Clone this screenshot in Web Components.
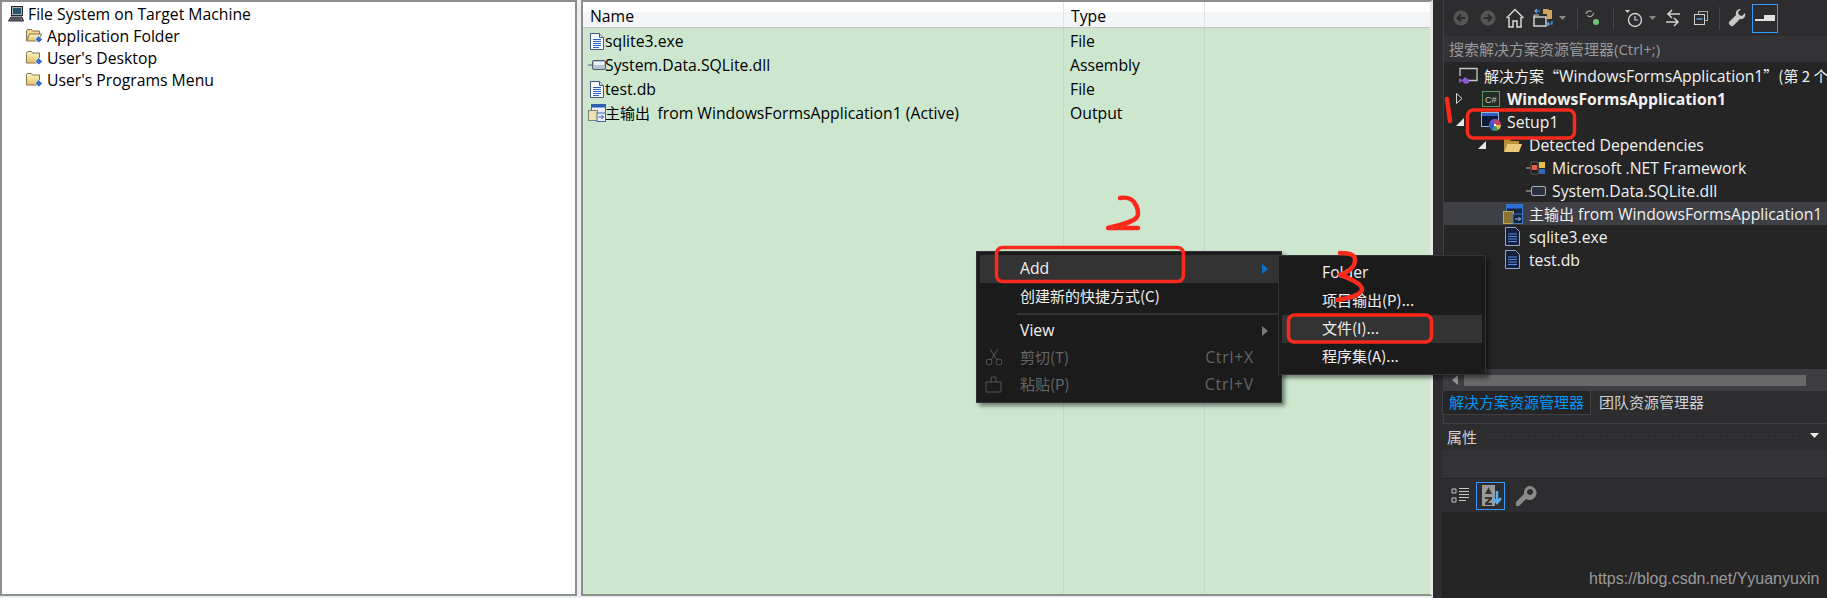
<!DOCTYPE html>
<html>
<head>
<meta charset="utf-8">
<style>
html, body { margin: 0; height: 100%; overflow: hidden; background: #2d2d30; }
body { font: 15.75px "Open Sans", "Noto Sans CJK SC", sans-serif; }
</style>
</head>
<body>
<svg width="0" height="0" style="position:absolute">
	<defs>
		<symbol id="doc-light" viewBox="0 0 14 17">
			<path d="M.5 .5h9l4 4v12h-13z" fill="#f6f8fd" stroke="#46587c"/>
			<path d="M9.500 .5v4h4" fill="#cdd7ea" stroke="#46587c"/>
			<path d="M3 6.500h8M3 8.500h8M3 10.500h8M3 12.500h8M3 14.500h6" stroke="#2c62c6"/>
		</symbol>
		<symbol id="doc-dark" viewBox="0 0 15 19">
			<path d="M.5 .5h10l4 4v14h-14z" fill="#15203c" stroke="#93a6cc"/>
			<path d="M3 7h9M3 9.500h9M3 12h9M3 14.500h9" stroke="#5b8ae6" stroke-width="1.200"/>
		</symbol>
		<symbol id="assembly" viewBox="0 0 18 12">
			<path d="M0 6h4" stroke="#7f8a9c" stroke-width="1.500"/>
			<rect x="4.500" y="1.500" width="13" height="9" rx="1.500" fill="#b8c2d0" stroke="#4f5a6e"/>
			<rect x="6" y="3" width="10" height="3" fill="#eef1f6"/>
		</symbol>
		<symbol id="output" viewBox="0 0 18 18">
			<rect x="3.500" y=".5" width="14" height="13" fill="#e8eefa" stroke="#3f66a8"/>
			<rect x="3.500" y=".5" width="14" height="3" fill="#2c5fb8"/>
			<rect x=".5" y="6.500" width="9" height="10" fill="#f0e2a8" stroke="#7c7f8a"/>
			<rect x="9" y="9" width="8.500" height="8.500" fill="#e8eefa" stroke="#3f66a8"/>
			<path d="M10.500 13h5M13.500 11l2 2-2 2" fill="none" stroke="#2c5fb8"/>
		</symbol>
		<symbol id="output-dark" viewBox="0 0 20 20">
			<rect x="3.500" y=".5" width="16" height="15" fill="#16233c" stroke="#3f7ad0"/>
			<rect x="3.500" y=".5" width="16" height="4" fill="#2c6fd8"/>
			<rect x=".5" y="7.500" width="10" height="12" fill="#8a7434" stroke="#c0a850"/>
			<rect x="10" y="10" width="9.500" height="9.500" fill="#16233c" stroke="#3f7ad0"/>
			<path d="M12 15h6M15.500 13l2 2-2 2" fill="none" stroke="#9cc0f0"/>
		</symbol>
		<symbol id="folder" viewBox="0 0 17 14">
			<linearGradient id="fold" x1="0" y1="0" x2="0" y2="1"><stop offset="0" stop-color="#fdf6cf"/><stop offset="1" stop-color="#e6c060"/></linearGradient>
			<path d="M.5 12V2l1-1.500h4l1 1.500h7v10z" fill="url(#fold)" stroke="#85754c"/>
			<path d="M12.500 6.500l4 4-3.500 3.500-4-3.500z" fill="#3a6ecb" stroke="#fff" stroke-width=".8"/>
		</symbol>
		<symbol id="folder-open" viewBox="0 0 17 14">
			<linearGradient id="fold2" x1="0" y1="0" x2="0" y2="1"><stop offset="0" stop-color="#fdf6cf"/><stop offset="1" stop-color="#e6c060"/></linearGradient>
			<path d="M.5 12V2l1-1.500h4l1 1.500h7v3" fill="#f2d888" stroke="#85754c"/>
			<path d="M.5 12l3-7h12l-3 7z" fill="url(#fold2)" stroke="#85754c"/>
			<path d="M12.500 6.500l4 4-3.500 3.500-4-3.500z" fill="#3a6ecb" stroke="#fff" stroke-width=".8"/>
		</symbol>
		<symbol id="computer" viewBox="0 0 16 16">
			<rect x="3.500" y=".5" width="11" height="9" fill="#a8b0b8" stroke="#22262c"/>
			<rect x="5" y="2" width="8" height="6" fill="#23566e"/>
			<path d="M.5 15l2.500-4h11l1.500 4z" fill="#7a7e86" stroke="#22262c"/>
			<path d="M3 13h10" stroke="#22262c"/>
		</symbol>
	</defs>
</svg>
<vs-shell></vs-shell>
<script>
const ICONS = document.querySelector("svg defs");

function icon(id, w, h) {
	// <use> can't see across shadow roots, so inline the symbol in each tree
	const sym = ICONS.querySelector("#" + id);
	return `<svg width="${w}" height="${h}" viewBox="${sym.getAttribute("viewBox")}" style="display:block;flex:none">${sym.innerHTML}</svg>`;
}

// CJK runs are a bit smaller than the latin text next to them
class ZhText extends HTMLElement {
	constructor() {
		super();
		const shadow = this.attachShadow({ mode: "open" });
		shadow.innerHTML = `
			<style>
				:host { display: inline; font-size: 15px; font-family: "Noto Sans CJK SC", "Open Sans", sans-serif; }
			</style>
			<slot></slot>
		`;
	}
}
customElements.define("zh-t", ZhText);

class TreeRow extends HTMLElement {
	constructor() {
		super();
		const indent = this.getAttribute("indent") || "0";
		const arrow = this.getAttribute("arrow");
		const shadow = this.attachShadow({ mode: "open" });
		let arrowSvg = `<span class="arrow"></span>`;
		if (arrow === "open") {
			arrowSvg = `<span class="arrow"><svg width="8" height="8"><path d="M8 0v8h-8z" fill="#e8e8e8"/></svg></span>`;
		} else if (arrow === "closed") {
			arrowSvg = `<span class="arrow"><svg width="7" height="11"><path d="M.5 .5l5.500 5-5.500 5z" fill="none" stroke="#d8d8d8"/></svg></span>`;
		}
		shadow.innerHTML = `
			<style>
				:host {
					display: flex;
					align-items: center;
					height: 23px;
					padding-left: ${indent}px;
					white-space: nowrap;
				}
				:host([selected]) { background: #3f3f46; }
				.arrow { width: 23px; flex: none; display: flex; align-items: center; }
				.ic { width: 23px; flex: none; display: flex; justify-content: center; margin-right: 5px; }
				:host([plain]) .arrow { display: none; }
			</style>
			${arrowSvg}
			<span class="ic"><slot name="icon"></slot></span>
			<slot></slot>
		`;
	}
}
customElements.define("tree-row", TreeRow);

class FileTree extends HTMLElement {
	constructor() {
		super();
		const shadow = this.attachShadow({ mode: "open" });
		shadow.innerHTML = `
			<style>
				:host {
					display: block;
					width: 577px;
					height: 596px;
					flex: none;
					box-sizing: border-box;
					background: #fff;
					border: 2px solid #8e8e8e;
					color: #000;
					padding: 1px 0 0 6px;
				}
				.row { display: flex; align-items: center; height: 22px; white-space: nowrap; }
				.row svg { margin-right: 4px; }
				.sub { padding-left: 18px; }
				.sub svg { margin-right: 4px; }
			</style>
			<div class="row">${icon("computer", 16, 16)}File System on Target Machine</div>
			<div class="row sub">${icon("folder-open", 17, 14)}Application Folder</div>
			<div class="row sub">${icon("folder", 17, 14)}User's Desktop</div>
			<div class="row sub">${icon("folder", 17, 14)}User's Programs Menu</div>
		`;
	}
}
customElements.define("file-tree", FileTree);

class FileList extends HTMLElement {
	constructor() {
		super();
		const shadow = this.attachShadow({ mode: "open" });
		const rows = [
			["doc-light", 14, 17, "sqlite3.exe", "File"],
			["assembly", 18, 12, "System.Data.SQLite.dll", "Assembly"],
			["doc-light", 14, 17, "test.db", "File"],
			["output", 18, 18, "<zh-t>主输出</zh-t>&nbsp;from WindowsFormsApplication1 (Active)", "Output"],
		];
		shadow.innerHTML = `
			<style>
				:host {
					display: flex;
					flex-direction: column;
					flex: none;
					width: 852px;
					height: 596px;
					box-sizing: border-box;
					margin-left: 4px;
					border: 2px solid #8e8e8e;
					border-right: 3px solid #e6ebe8;
					border-top-color: #8e8e8e;
					background: #cde7cf;
					color: #000;
				}
				.head {
					display: grid;
					grid-template-columns: 481px 141px 1fr;
					height: 26px;
					flex: none;
					box-sizing: border-box;
					background: linear-gradient(#fff 0 10px, #f4f5f7 10px);
					border-bottom: 1px solid #c6c6c6;
				}
				.head span { padding: 3px 0 0 7px; border-right: 1px solid #e2e3e6; }
				.head span:last-child { border: 0; }
				.body { flex: 1; display: grid; grid-template-columns: 481px 141px 1fr; }
				.col { border-right: 1px solid #bcd9cc; padding-top: 1px; }
				.col:last-child { border: 0; }
				.row { display: flex; align-items: center; height: 24px; white-space: nowrap; padding-left: 5px; }
				.ic { width: 17px; flex: none; display: flex; justify-content: center; }
				.type { padding-left: 6px; }
			</style>
			<div class="head"><span>Name</span><span>Type</span><span></span></div>
			<div class="body">
				<div class="col">${rows.map(r => `<div class="row"><span class="ic">${icon(r[0], r[1], r[2])}</span><span>${r[3]}</span></div>`).join("")}</div>
				<div class="col">${rows.map(r => `<div class="row type">${r[4]}</div>`).join("")}</div>
				<div class="col"></div>
			</div>
		`;
	}
}
customElements.define("file-list", FileList);

class MenuItem extends HTMLElement {
	constructor() {
		super();
		const shadow = this.attachShadow({ mode: "open" });
		const key = this.getAttribute("key");
		const arrow = this.getAttribute("arrow");
		shadow.innerHTML = `
			<style>
				:host {
					display: flex;
					align-items: center;
					box-sizing: border-box;
					height: 28px;
					padding: 0 10px 3px 40px;
					color: #f1f1f1;
					white-space: nowrap;
				}
				:host([active]) { background: #333334; }
				:host([disabled]) { color: #656565; height: 27px; }
				.label { flex: 1; }
				.key { padding-right: 14px; letter-spacing: .8px; }
				.ic { position: absolute; left: 8px; display: flex; }
				svg { display: block; }
			</style>
			<span class="ic"><slot name="icon"></slot></span>
			<span class="label"><slot></slot></span>
			${key ? `<span class="key">${key}</span>` : ""}
			${arrow ? `<svg width="6" height="10" style="margin-top:3px"><path d="M0 0l6 5-6 5z" fill="${arrow}"/></svg>` : ""}
		`;
	}
}
customElements.define("menu-item", MenuItem);

class PopMenu extends HTMLElement {
	constructor() {
		super();
		const shadow = this.attachShadow({ mode: "open" });
		shadow.innerHTML = `
			<style>
				:host {
					position: absolute;
					box-sizing: border-box;
					background: #1b1b1c;
					border: 1px solid #333337;
					box-shadow: 3px 3px 4px rgba(0,0,0,.45);
					padding: 3px;
				}
			</style>
			<slot></slot>
		`;
	}
}
customElements.define("pop-menu", PopMenu);

class SolutionPanel extends HTMLElement {
	constructor() {
		super();
		const shadow = this.attachShadow({ mode: "open" });
		shadow.innerHTML = `
			<style>
				:host {
					display: flex;
					flex-direction: column;
					flex: 1;
					min-width: 0;
					box-sizing: border-box;
					background: #2d2d30;
					color: #f1f1f1;
					padding-left: 10px;
					overflow: hidden;
				}
				.inner { flex: 1; display: flex; flex-direction: column; border-left: 1px solid #3f3f46; min-height: 0; }
				.tools { height: 36px; flex: none; display: flex; align-items: center; padding-left: 7px; background: #2d2d30; }
				.tools .sep { width: 1px; height: 23px; background: #46464a; flex: none; }
				.tools svg { display: block; flex: none; }
				.pin { width: 26px; height: 29px; margin-left: 6px; border: 1px solid #3399ff; box-sizing: border-box; display: flex; align-items: center; justify-content: center; }
				.search { height: 26px; flex: none; box-sizing: border-box; background: #333337; color: #999; display: flex; align-items: center; padding: 0 0 2px 5px; font-size: 15px; }
				.tree { height: 307px; flex: none; background: #252526; padding-top: 2px; box-sizing: border-box; overflow: hidden; }
				.hscroll { height: 22px; flex: none; background: #3e3e42; display: flex; align-items: center; }
				.thumb { margin-left: 5px; width: 342px; height: 11px; background: #686868; }
				.tabs { height: 24px; flex: none; display: flex; background: #2d2d30; font-size: 15px; }
				.tabs span { display: flex; align-items: center; padding: 0 6px 3px; color: #d0d0d0; margin-left: 2px; }
				.tabs .on { background: #252526; color: #0097fb; border: 1px solid #3f3f46; border-top: 0; margin-left: -2px; }
				.gap { height: 8px; flex: none; }
				.props { flex: 1; display: flex; flex-direction: column; background: #252526; border-top: 1px solid #3f3f46; margin-left: -2px; }
				.props-title { height: 26px; flex: none; box-sizing: border-box; display: flex; align-items: center; padding: 0 7px 2px 5px; background: #2d2d30; color: #d0d0d0; font-size: 15px; }
				.dots { flex: 1; margin: 0 10px; height: 6px; background-image: radial-gradient(#414146 1px, transparent 1px); background-size: 3px 3px; }
				.props-sel { height: 29px; flex: none; background: #333337; border-bottom: 1px solid #252526; box-sizing: border-box; }
				.props-bar { height: 33px; flex: none; background: #2d2d30; display: flex; align-items: center; padding-left: 9px; }
				.sort { width: 29px; height: 28px; margin-left: 5px; border: 1px solid #3399ff; box-sizing: border-box; display: flex; align-items: center; justify-content: center; }
				.vsep { width: 1px; height: 24px; margin: 0 6px 0 3px; background: #222; }
				b { font-weight: bold; }
			</style>
			<div class="inner">
				<div class="tools">
					<svg width="20" height="20"><circle cx="10" cy="10" r="7.500" fill="#555"/><path d="M14.500 10H7M10 6.500l-3.500 3.500 3.500 3.500" fill="none" stroke="#2d2d30" stroke-width="2"/></svg>
					<svg style="margin-left:7px" width="20" height="20"><circle cx="10" cy="10" r="7.500" fill="#555"/><path d="M5.500 10H13M10 6.500l3.500 3.500-3.500 3.500" fill="none" stroke="#2d2d30" stroke-width="2"/></svg>
					<svg style="margin-left:8px" width="18" height="20"><path d="M.5 10l8.500-8.500 8.500 8.500" fill="none" stroke="#d8d8d8" stroke-width="1.500"/><path d="M3 9v10h4v-6h4v6h4V9" fill="none" stroke="#d8d8d8" stroke-width="1.500"/></svg>
					<svg style="margin-left:8px" width="22" height="20"><path d="M2 9h12v9H2z" fill="none" stroke="#d0d0d0" stroke-width="1.500"/><path d="M2 9V7h5" fill="none" stroke="#d0d0d0"/><path d="M11 1h5l1 1h3v9h-5V6h-4z" fill="#cfa45c"/><path d="M3 3h5M5 1l-2 2 2 2" stroke="#5aa0e8" stroke-width="1.200" fill="none"/><path d="M20 13v3h-5M17 14l-2 2 2 2" stroke="#5aa0e8" stroke-width="1.200" fill="none"/></svg>
					<svg style="margin-left:5px" width="8" height="5"><path d="M0 0h7l-3.500 4z" fill="#888"/></svg>
					<span class="sep" style="margin-left:10px"></span>
					<svg style="margin-left:6px" width="16" height="20"><path d="M2 6a3.500 3.500 0 0 1 5.500-2.500M9.500 5a3.500 3.500 0 0 1-6 2.500" fill="none" stroke="#aaa" stroke-width="1.200"/><circle cx="12" cy="14" r="3" fill="#6cc36a"/></svg>
					<span class="sep" style="margin-left:13px"></span>
					<svg style="margin-left:9px" width="20" height="22"><circle cx="12" cy="13" r="6.500" fill="none" stroke="#d0d0d0" stroke-width="1.400"/><path d="M12 9v4h3" fill="none" stroke="#d0d0d0" stroke-width="1.200"/><path d="M2 3h5l-2.500 3z" fill="#d0d0d0"/></svg>
					<svg style="margin-left:6px" width="8" height="5"><path d="M0 0h7l-3.500 4z" fill="#888"/></svg>
					<svg style="margin-left:8px" width="16" height="18"><path d="M15 5H3M7 1L3 5l4 4M1 13h12M9 9l4 4-4 4" fill="none" stroke="#d0d0d0" stroke-width="1.600"/></svg>
					<svg style="margin-left:12px" width="16" height="16"><rect x="5.500" y="1.500" width="9" height="9" fill="none" stroke="#aaa"/><rect x="1.500" y="4.500" width="10" height="10" fill="#2d2d30" stroke="#d0d0d0"/><path d="M3.500 9h6" stroke="#5aa0e8" stroke-width="1.500"/></svg>
					<span class="sep" style="margin-left:10px"></span>
					<svg style="margin-left:8px" width="18" height="18"><path d="M17 4l-3 3-3-1-1-3 3-3c-3-.5-6 2-5 6L1 13c-1 2 2 5 4 4l7-7c4 1 6-3 5-6z" fill="#c8c8c8"/></svg>
					<span class="pin"><svg width="20" height="6"><path d="M0 4h9V0h11v6H0z" fill="#e0e0e0"/></svg></span>
				</div>
				<div class="search">搜索解决方案资源管理器(Ctrl+;)</div>
				<div class="tree">
					<tree-row plain indent="12"><svg slot="icon" width="20" height="18" viewBox="0 0 20 18"><path d="M2 9V1.500h17v12H10" fill="none" stroke="#c8c8c8" stroke-width="1.300"/><path d="M1 11l3 2 3-3 4 3v3l-4 1-3-3-3 2z" fill="#8a5ad0"/></svg><zh-t>解决方案“</zh-t>WindowsFormsApplication1<zh-t>”(第 2 个</zh-t></tree-row>
					<tree-row indent="12" arrow="closed"><svg slot="icon" width="18" height="16"><rect x=".5" y=".5" width="17" height="15" fill="#232b24" stroke="#5e9a5e"/><text x="3" y="12" font-size="9" fill="#c8c8c8" font-family="Liberation Sans">C#</text></svg><b>WindowsFormsApplication1</b></tree-row>
					<tree-row indent="12" arrow="open"><svg slot="icon" width="20" height="19" viewBox="0 0 20 19"><rect x=".5" y=".5" width="17" height="14" fill="#0e1a3a" stroke="#9db4dc"/><rect x="1" y="1" width="16" height="3" fill="#2d62c0"/><circle cx="14" cy="13" r="6" fill="#2c5cc0"/><path d="M14 13L8.500 10.500a6 6 0 0 1 5.500-3.500z" fill="#7a50c0"/><path d="M14 13V7a6 6 0 0 1 6 6z" fill="#d04050"/><path d="M14 13h6a6 6 0 0 1-3 5z" fill="#e0c040"/><path d="M14 13l3 5a6 6 0 0 1-6 0z" fill="#40a060"/><circle cx="14" cy="13" r="1.200" fill="#fff"/></svg>Setup1</tree-row>
					<tree-row indent="34" arrow="open"><svg slot="icon" width="19" height="14" viewBox="0 0 19 14"><path d="M1 14V1h6l1 2h8v3H4z" fill="#b89038"/><path d="M1 14l3-8h15l-3 8z" fill="#ecc878"/></svg>Detected Dependencies</tree-row>
					<tree-row indent="57"><svg slot="icon" width="20" height="14" viewBox="0 0 20 14"><path d="M0 7h5" stroke="#888" stroke-width="1.500"/><rect x="5" y="1" width="7" height="12" fill="#1e1e1e" stroke="#555"/><rect x="6" y="4" width="5" height="5" fill="#e85c50"/><rect x="13" y="1" width="6" height="6" fill="#e8c040"/><rect x="13" y="8" width="6" height="5" fill="#3068c0"/></svg>Microsoft .NET Framework</tree-row>
					<tree-row indent="57"><svg slot="icon" width="20" height="12" viewBox="0 0 20 12"><path d="M0 6h5" stroke="#888" stroke-width="1.500"/><rect x="5.500" y="1.500" width="14" height="9" rx="1.500" fill="#2a3040" stroke="#a8b0c0"/></svg>System.Data.SQLite.dll</tree-row>
					<tree-row indent="34" selected><span slot="icon" style="display:block">${icon("output-dark", 20, 20)}</span><zh-t>主输出</zh-t>&nbsp;from WindowsFormsApplication1</tree-row>
					<tree-row indent="34"><span slot="icon" style="display:block">${icon("doc-dark", 15, 19)}</span>sqlite3.exe</tree-row>
					<tree-row indent="34"><span slot="icon" style="display:block">${icon("doc-dark", 15, 19)}</span>test.db</tree-row>
				</div>
				<div class="hscroll"><svg width="7" height="10" style="margin-left:8px"><path d="M6 0v10L0 5z" fill="#999"/></svg><div class="thumb"></div></div>
				<div class="tabs"><span class="on">解决方案资源管理器</span><span>团队资源管理器</span></div>
				<div class="gap"></div>
				<div class="props">
					<div class="props-title">属性<span class="dots"></span><svg width="10" height="6"><path d="M0 0h9l-4.500 5z" fill="#e8e8e8"/></svg></div>
					<div class="props-sel"></div>
					<div class="props-bar">
						<svg width="20" height="18"><path d="M1 2h4v4H1zM1 11h4v4H1zM8 1.500h10M8 4.500h10M8 7.500h10M8 10.500h10M8 13.500h7" fill="none" stroke="#c8c8c8"/></svg>
						<span class="sort"><svg width="24" height="24"><rect x="3" y="1" width="13" height="21" fill="#9a9a9a"/><path d="M6 10l3.500-7 3.500 7zM6 13h7v2l-4 4h4v2H6v-2l4-4H6z" fill="#333"/><path d="M18 7v11M14 14l4 5 4-5" fill="none" stroke="#5aaef0" stroke-width="2.500"/></svg></span>
						<span class="vsep"></span>
						<svg width="22" height="22"><path fill-rule="evenodd" d="M14 1a7 7 0 1 1-3 13L4 21H1v-4l8-8a7 7 0 0 1 5-8zM15 4a3 3 0 1 0 .1 0z" fill="#8a8a8a"/></svg>
					</div>
				</div>
			</div>
		`;
	}
}
customElements.define("solution-panel", SolutionPanel);

class RedMarks extends HTMLElement {
	constructor() {
		super();
		const shadow = this.attachShadow({ mode: "open" });
		shadow.innerHTML = `
			<style>
				:host { position: absolute; left: 0; top: 0; width: 1827px; height: 598px; pointer-events: none; }
				svg { position: absolute; left: 0; top: 0; }
				path, rect { fill: none; stroke: #fb2a1c; stroke-width: 3.500; stroke-linecap: round; stroke-linejoin: round; }
				path { stroke-width: 4.500; }
			</style>
			<svg width="1827" height="598">
				<rect x="1467.500" y="110" width="107" height="28" rx="6"/>
				<path d="M1447 99l3 22"/>
				<path d="M1120 198c5-1 11 0 14 4 4 5 5 12 3 15-3 5-16 8-29 11h30"/>
				<rect x="996.500" y="247.500" width="187" height="34" rx="6"/>
				<path d="M1340 253c6 0 15 1 15 6 1 7-6 13-15 16 8 2 22 9 22 14 0 6-15 10-25 11"/>
				<rect x="1288.500" y="315" width="143" height="27" rx="6"/>
			</svg>
		`;
	}
}
customElements.define("red-marks", RedMarks);

class VsShell extends HTMLElement {
	constructor() {
		super();
		const shadow = this.attachShadow({ mode: "open" });
		shadow.innerHTML = `
			<style>
				:host { display: flex; width: 1827px; height: 598px; position: relative; overflow: hidden; background: #eceff0; }
				.m1 { left: 976px; top: 251px; width: 306px; }
				.m2 { left: 1278px; top: 255px; width: 208px; }
				.wm { position: absolute; left: 1589px; top: 570px; color: #9a9a9a; font: 16px "Liberation Sans", sans-serif; }
				hr { border: 0; height: 2px; background: #333337; margin: 2px 0 2px 37px; }
			</style>
			<file-tree></file-tree>
			<file-list></file-list>
			<solution-panel></solution-panel>
			<pop-menu class="m1">
				<menu-item active arrow="#0e70c0">Add</menu-item>
				<menu-item><zh-t>创建新的快捷方式(C)</zh-t></menu-item>
				<hr>
				<menu-item arrow="#7a7a7a">View</menu-item>
				<menu-item disabled key="Ctrl+X"><zh-t>剪切(T)</zh-t><svg slot="icon" width="18" height="18"><path d="M5 1l7 11M13 1L6 12" stroke="#555" fill="none"/><circle cx="4" cy="14" r="3" fill="none" stroke="#555"/><circle cx="14" cy="14" r="3" fill="none" stroke="#555"/></svg></menu-item>
				<menu-item disabled key="Ctrl+V"><zh-t>粘贴(P)</zh-t><svg slot="icon" width="18" height="18"><path d="M1 7h15v10H1zM6 7V2h5v5" fill="none" stroke="#555"/></svg></menu-item>
			</pop-menu>
			<pop-menu class="m2">
				<menu-item>Folder</menu-item>
				<menu-item><zh-t>项目输出(P)...</zh-t></menu-item>
				<menu-item active><zh-t>文件(I)...</zh-t></menu-item>
				<menu-item><zh-t>程序集(A)...</zh-t></menu-item>
			</pop-menu>
			<span class="wm">https://blog.csdn.net/Yyuanyuxin</span>
			<red-marks></red-marks>
		`;
	}
}
customElements.define("vs-shell", VsShell);
</script>
</body>
</html>
